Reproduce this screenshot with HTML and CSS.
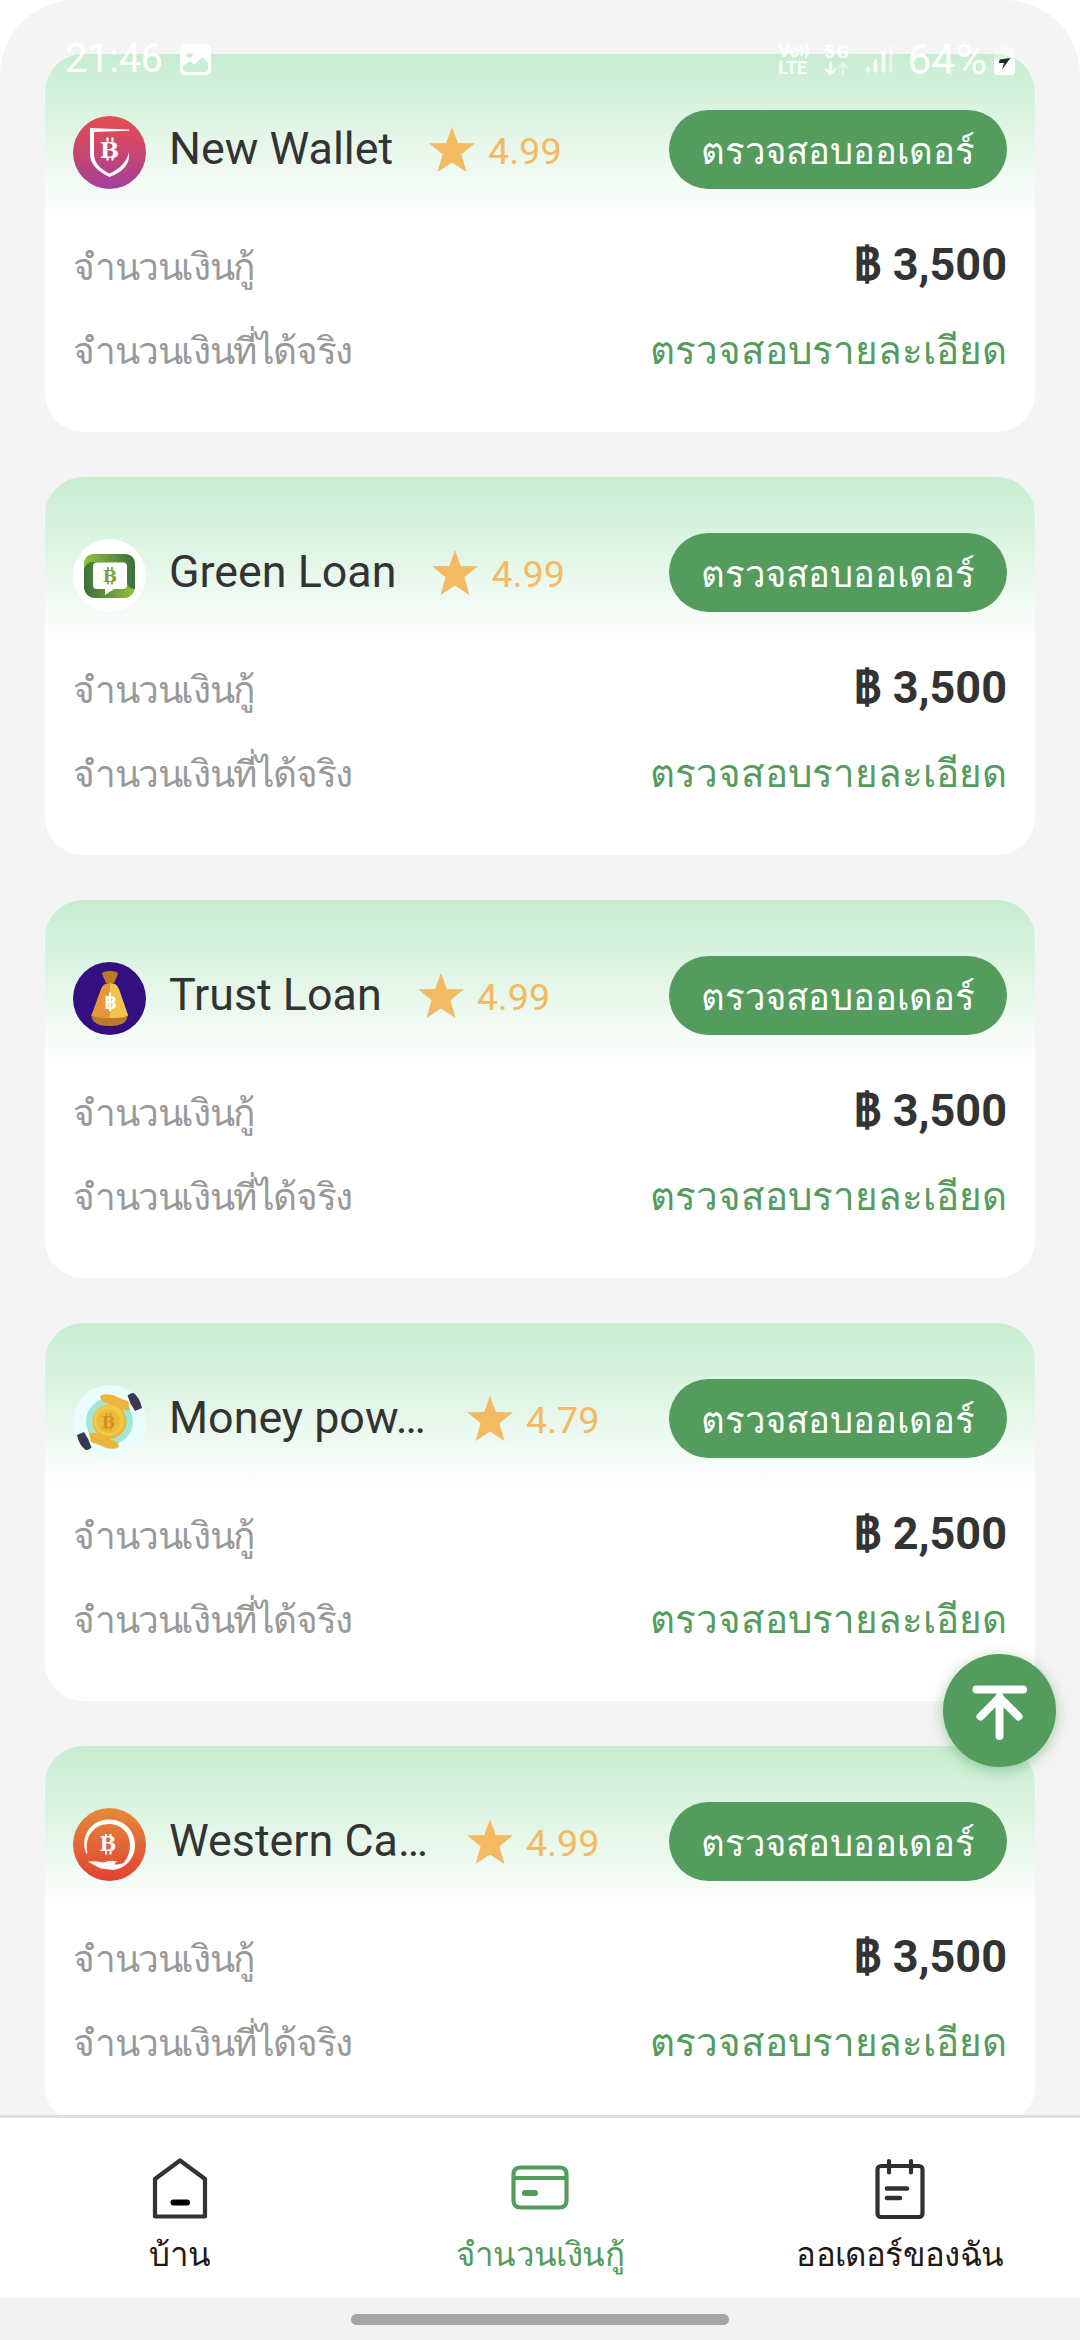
FILE: index.html
```html
<!DOCTYPE html>
<html lang="th">
<head>
<meta charset="utf-8">
<title>จำนวนเงินกู้</title>
<link rel="stylesheet" href="styles.css">
</head>
<body>
<svg width="0" height="0" class="defs">
  <defs>
    <linearGradient id="gWallet" x1="0" y1="0" x2="0" y2="1"><stop offset="0" stop-color="#e54d4e"/><stop offset=".5" stop-color="#c8466f"/><stop offset="1" stop-color="#a23f9c"/></linearGradient>
    <linearGradient id="gWest" x1="0" y1="0" x2="0" y2="1"><stop offset="0" stop-color="#e58a3c"/><stop offset="1" stop-color="#e14232"/></linearGradient>
    <linearGradient id="gTop" x1="0" y1="0" x2="1" y2="0"><stop offset="0" stop-color="#93c13d"/><stop offset="1" stop-color="#396f3b"/></linearGradient>
    <linearGradient id="gBot" x1="0" y1="0" x2="1" y2="0"><stop offset="0" stop-color="#396f3b"/><stop offset="1" stop-color="#93c13d"/></linearGradient>
    <symbol id="star" viewBox="0 0 46 45"><path d="M23 0l5.800 15.900L46 16.200 32.400 27.300 37.500 45 23 35.600 8.500 45l5.100-17.700L0 16.200l17.200-.3z" fill="#f4ba62"/></symbol>
  </defs>
</svg>
<div class="screen">
  <main class="list">
    <article class="card">
      <header class="head">
        <svg class="logo" viewBox="0 0 73 73"><circle cx="36.500" cy="36.500" r="36.500" fill="url(#gWallet)"/><path d="M17 12l39 1.500v1.200L21 16v22q0 12 15.500 19.500Q53 50 56 36q2 17-19.500 25Q17 52 17 38z" fill="#fff"/><text x="36.500" y="41.500" class="coin" fill="#fff" font-size="23">B</text><path d="M34.500 21.500v4m5-4v4m0 15v4m-5-4v4" stroke="#fff" stroke-width="2.200"/></svg>
        <h2 class="name">New Wallet</h2>
        <svg class="star"><use href="#star"/></svg><span class="rate">4.99</span>
        <button class="check">ตรวจสอบออเดอร์</button>
      </header>
      <div class="row"><span class="label">จำนวนเงินกู้</span><b class="price">฿ 3,500</b></div>
      <div class="row"><span class="label">จำนวนเงินที่ได้จริง</span><a class="detail">ตรวจสอบรายละเอียด</a></div>
    </article>
    <article class="card">
      <header class="head">
        <svg class="logo" viewBox="0 0 73 73"><circle cx="36.500" cy="36.500" r="36.500" fill="#fff"/><rect x="11" y="15" width="51" height="44" rx="11" fill="url(#gBot)"/><path d="M11 31V26Q11 15 22 15H51Q62 15 62 26V50Q54 50 54 42V28Q54 23 49 23H20Q13 23 11 31z" fill="url(#gTop)"/><path d="M24 23.500h26q4 0 4 4V46q0 4-4 4H41l-9 6v-6h-8q-4 0-4-4V27.500q0-4 4-4z" fill="#fff"/><text x="37" y="43" class="coin" fill="#77a43a" font-size="17">B</text><path d="M35 28v3m4-3v3m0 11.500v3m-4-3v3" stroke="#77a43a" stroke-width="1.800"/></svg>
        <h2 class="name">Green Loan</h2>
        <svg class="star"><use href="#star"/></svg><span class="rate">4.99</span>
        <button class="check">ตรวจสอบออเดอร์</button>
      </header>
      <div class="row"><span class="label">จำนวนเงินกู้</span><b class="price">฿ 3,500</b></div>
      <div class="row"><span class="label">จำนวนเงินที่ได้จริง</span><a class="detail">ตรวจสอบรายละเอียด</a></div>
    </article>
    <article class="card">
      <header class="head">
        <svg class="logo" viewBox="0 0 73 73"><circle cx="36.500" cy="36.500" r="36.500" fill="#330f7f"/><path d="M29 12q0-3 8-3t8 3l-4 9H33zM18.500 52h36q1 12-18 12t-18-12z" fill="#ba7a2a"/><path d="M37 21q-7 0-9 6L18.500 53q1 3 18.500 3z" fill="#e69737"/><path d="M37 21q7 0 9 6l9 26q-1 3-18 3z" fill="#f2c34f"/><text x="37.500" y="47" class="coin sans" fill="#fff" font-size="19">B</text><path d="M37 30.500v18.500" stroke="#fff" stroke-width="2"/></svg>
        <h2 class="name">Trust Loan</h2>
        <svg class="star"><use href="#star"/></svg><span class="rate">4.99</span>
        <button class="check">ตรวจสอบออเดอร์</button>
      </header>
      <div class="row"><span class="label">จำนวนเงินกู้</span><b class="price">฿ 3,500</b></div>
      <div class="row"><span class="label">จำนวนเงินที่ได้จริง</span><a class="detail">ตรวจสอบรายละเอียด</a></div>
    </article>
    <article class="card">
      <header class="head">
        <svg class="logo" viewBox="0 0 73 73"><circle cx="36.500" cy="36.500" r="36.500" fill="#e9fdfc"/><circle cx="36.500" cy="36.500" r="23.500" fill="#9fe8d5"/><path d="M27 12q1-4 13-2 8 4 15 6l2 9q-8 1-13-3-3-2-6-2v4l-3-6q-6 0-8-6z" fill="#eab53d"/><path d="M46 61q-1 4-13 2-8-4-15-6l-2-9q8-1 13 3 3 2 6 2v-4l3 6q6 0 8 6z" fill="#eab53d"/><circle cx="36.500" cy="36.500" r="17" fill="#e9b437"/><circle cx="36" cy="35.500" r="15.500" fill="#f5c944"/><circle cx="35.500" cy="36" r="12" fill="#eebb38"/><text x="35.500" y="42.500" class="coin" fill="#cf922a" font-size="16">B</text><path d="M33.500 28v3m4-3v3m0 11v3m-4-3v3" stroke="#cf922a" stroke-width="1.700"/><path d="M54.500 10.500q3-3 6-2.500 6 4 8.500 15L62 26q-5-7-7.500-15.500zM4 50l7-3q5 7 7.500 15.500-3 3-6 2.500Q6 60 4 50z" fill="#3b3853"/></svg>
        <h2 class="name clipped">Money pow…</h2>
        <svg class="star"><use href="#star"/></svg><span class="rate">4.79</span>
        <button class="check">ตรวจสอบออเดอร์</button>
      </header>
      <div class="row"><span class="label">จำนวนเงินกู้</span><b class="price">฿ 2,500</b></div>
      <div class="row"><span class="label">จำนวนเงินที่ได้จริง</span><a class="detail">ตรวจสอบรายละเอียด</a></div>
    </article>
    <article class="card">
      <header class="head">
        <svg class="logo" viewBox="0 0 73 73"><circle cx="36.500" cy="36.500" r="36.500" fill="url(#gWest)"/><path d="M13.500 46C6 29 18 11.500 36 11.500c15 0 26 11 26 25.500 0 13-9 23.500-22 25l-12-1.500q-7-3-13-7 7-1 15 1 8-3 14-1l-3 3q7 0 10-2Q57 47 57 37c0-12-9-21-21-21C21 16 11 29 14.500 45z" fill="#fff"/><text x="35" y="43" class="coin" fill="#fff" font-size="20">B</text><path d="M33 26v4m4.500-4v4m0 12.500v4m-4.500-4v4" stroke="#fff" stroke-width="2"/></svg>
        <h2 class="name clipped">Western Ca…</h2>
        <svg class="star"><use href="#star"/></svg><span class="rate">4.99</span>
        <button class="check">ตรวจสอบออเดอร์</button>
      </header>
      <div class="row"><span class="label">จำนวนเงินกู้</span><b class="price">฿ 3,500</b></div>
      <div class="row"><span class="label">จำนวนเงินที่ได้จริง</span><a class="detail">ตรวจสอบรายละเอียด</a></div>
    </article>
  </main>
  <nav class="tabs">
    <a class="tab"><svg viewBox="0 0 64 64"><path d="M7 23L32 4.500 57 23v37.500H7z" fill="none" stroke="#333" stroke-width="4.200" stroke-linejoin="round"/><path d="M25.500 46.500h13.500" stroke="#000" stroke-width="6" stroke-linecap="round"/></svg><span>บ้าน</span></a>
    <a class="tab active"><svg viewBox="0 0 64 64"><path d="M12.500 11.500h39q7 0 7 7v26q0 7-7 7h-39q-7 0-7-7v-26q0-7 7-7zM5.500 22h53" fill="none" stroke="#539c5d" stroke-width="4.200"/><path d="M17 37h10" stroke="#539c5d" stroke-width="6" stroke-linecap="round"/></svg><span>จำนวนเงินกู้</span></a>
    <a class="tab"><svg viewBox="0 0 64 64"><g fill="none" stroke="#303030" stroke-linecap="round"><rect x="9.500" y="10" width="45" height="51" rx="3.500" stroke-width="4.200"/><path d="M21 5v11.500M43 5v11.500" stroke-width="4.200"/><path d="M19 32.500h20M19 42h13" stroke-width="4.600"/></g></svg><span>ออเดอร์ของฉัน</span></a>
  </nav>
  <footer class="gesture"><i></i></footer>

  <div class="status">
    <span class="time">21:46</span>
    <svg class="pic" viewBox="0 0 31 31"><path fill-rule="evenodd" d="M6 0h19q6 0 6 6v19q0 6-6 6H6q-6 0-6-6V6q0-6 6-6zM9.500 7a3.300 3.300 0 1 0 .01 0zM3 22v2.500Q3 28 6.500 28h18q3.500 0 3.500-3.500V19l-5.500-6-8.500 8-4-4z" fill="#fff"/></svg>
    <div class="volte"><span>Vo<svg viewBox="0 0 10 16"><path d="M1.500 4.500q3 4 0 9M6 2.500q5 6 0 13" fill="none" stroke="#fff" stroke-width="2.400" stroke-linecap="round"/></svg></span><span>LTE</span></div>
    <div class="fiveg"><span>5G</span><svg viewBox="0 0 26 15"><path d="M6.500 1.500v11.500m-4.500-4.500l4.500 4.500 4.500-4.500" fill="none" stroke="#fff" stroke-width="2.400" stroke-linecap="round"/><path d="M19 13.500V2m-4.500 5l4.500-4.500 4.500 4.500" fill="none" stroke="#fff" stroke-opacity=".45" stroke-width="2.400" stroke-linecap="round"/></svg></div>
    <svg class="signal" viewBox="0 0 27 30"><path d="M2 24.500V27M9.500 17v10M17.500 9v18" stroke="#fff" stroke-width="3.500" stroke-linecap="round"/><path d="M25 3v24" stroke="#fff" stroke-opacity=".45" stroke-width="3.500" stroke-linecap="round"/></svg>
    <span class="pct">64%</span>
    <svg class="bat" viewBox="0 0 21 31"><path d="M5 3q0-3 3-3h5q3 0 3 3h2q3 0 3 3v9H0V6q0-3 3-3z" fill="#fff" fill-opacity=".35"/><path d="M0 15h21v13q0 3-3 3H3q-3 0-3-3z" fill="#fff"/><path d="M5.500 15.500L16.500 14 8 25.500l2-6.500H5z" fill="#252827"/></svg>
  </div>
  <button class="fab" aria-label="กลับขึ้นด้านบน"><svg viewBox="0 0 113 113"><path d="M33.500 35.500h46.500M56.500 82V43M37.500 62.500l19-19 19 19" fill="none" stroke="#fff" stroke-width="8" stroke-linecap="round" stroke-linejoin="round"/></svg></button>
</div>
</body>
</html>
```
FILE: styles.css
```css
* { box-sizing: border-box; }
body { margin: 0; background: #fff; font-family: Roboto, "Noto Sans", FreeSans, sans-serif; }
.defs { position: absolute; }
.screen { position: relative; width: 1080px; height: 2340px; display: flex; flex-direction: column; overflow: hidden; background: #f4f4f4; border-radius: 75px 75px 0 0; }
.list { flex: 1; min-height: 0; overflow: hidden; padding: 54px 45px 0; display: flex; flex-direction: column; gap: 45px; }
.card { flex: none; height: 378px; border-radius: 38px; padding: 56px 28px 0; background: linear-gradient(#c6edd0, #fff 164px); }
.head { height: 79px; display: flex; align-items: center; }
.logo { flex: none; width: 73px; height: 73px; margin-top: 6px; }
.coin { font-family: "DejaVu Serif", serif; font-weight: bold; text-anchor: middle; }
.coin.sans { font-family: Roboto, sans-serif; }
.name { margin: -1px 0 0 23px; font-size: 44.800px; line-height: 52px; font-weight: 400; color: #333; white-space: nowrap; }
.name.clipped { width: 262px; }
.star { flex: none; width: 46px; height: 45px; margin: 0 0 0 36px; }
.rate { margin: 3px 0 0 13px; font-size: 37.700px; line-height: 44px; color: #f4ba62; }
.check { margin-left: auto; width: 338px; height: 79px; padding: 2px 0 0; border: 0; border-radius: 40px; background: #539c5d; color: #fff; font: inherit; font-size: 36.500px; white-space: nowrap; }
.row { height: 84px; display: flex; align-items: center; justify-content: space-between; line-height: 50px; white-space: nowrap; }
.row:nth-of-type(1) { margin-top: 34px; }
.label { padding-top: 5px; font-size: 37px; letter-spacing: -1.400px; color: #999; }
.price { font-size: 45px; color: #333; }
.detail { padding-top: 3px; font-size: 38.600px; color: #539c5d; }
.tabs { height: 183px; flex: none; display: flex; border-top: 3px solid #dfdfdf; background: #fff; }
.tab { flex: 1; display: flex; flex-direction: column; align-items: center; padding-top: 38px; color: #231815; }
.tab svg { width: 64px; height: 64px; }
.tab span { margin-top: 11px; font-size: 33px; letter-spacing: -.6px; line-height: 48px; white-space: nowrap; }
.tab.active { color: #539c5d; }
.gesture { flex: none; height: 42px; background: #f1f1f1; display: flex; justify-content: center; padding-top: 16px; }
.gesture i { width: 378px; height: 11px; border-radius: 6px; background: #a5a5a5; }
.status { position: absolute; left: 65px; top: 37px; width: 950px; height: 44px; display: flex; align-items: center; color: #fff; font-size: 40px; line-height: 44px; }
.time { letter-spacing: -.4px; }
.pic { width: 31px; height: 31px; margin-left: 17px; }
.volte, .fiveg { display: flex; flex-direction: column; font-size: 18px; line-height: 17px; font-weight: 700; }
.volte { width: 31px; margin-left: auto; }
.volte span { display: flex; }
.volte svg { width: 10px; height: 16px; }
.fiveg { width: 26px; margin-left: 15px; }
.fiveg span { letter-spacing: 2px; }
.fiveg svg { width: 26px; height: 15px; margin-top: 1px; }
.signal { width: 27px; height: 30px; margin-left: 16px; }
.pct { margin-left: 14px; font-size: 43px; }
.bat { width: 21px; height: 31px; margin-left: 7px; }
.fab { position: absolute; left: 943px; top: 1654px; width: 113px; height: 113px; padding: 0; border: 0; border-radius: 50%; background: #539c5d; box-shadow: 0 3px 14px rgba(83,156,93,.5); }
.fab svg { display: block; width: 113px; height: 113px; }
```
